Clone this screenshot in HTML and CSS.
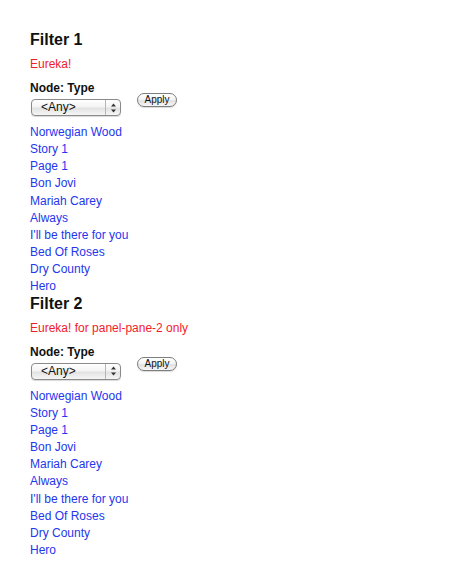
FILE: index.html
```html
<!DOCTYPE html>
<html>
<head>
<meta charset="utf-8">
<link rel="stylesheet" href="styles.css">
</head>
<body>
<div class="page">
  <section class="block">
    <h2 class="title">Filter 1</h2>
    <div class="note">Eureka!</div>
    <div class="label">Node: Type</div>
    <div class="row">
      <div class="select"><span class="sel-text">&lt;Any&gt;</span><span class="sel-arrows"><svg width="7" height="10" viewBox="0 0 7 10"><path d="M3.5 0.5 L6 3.5 L1 3.5 Z M3.5 9.5 L6 6.5 L1 6.5 Z" fill="#333"/></svg></span></div>
      <div class="btn">Apply</div>
    </div>
    <ul class="links">
      <li><a href="#">Norwegian Wood</a></li>
      <li><a href="#">Story 1</a></li>
      <li><a href="#">Page 1</a></li>
      <li><a href="#">Bon Jovi</a></li>
      <li><a href="#">Mariah Carey</a></li>
      <li><a href="#">Always</a></li>
      <li><a href="#">I'll be there for you</a></li>
      <li><a href="#">Bed Of Roses</a></li>
      <li><a href="#">Dry County</a></li>
      <li><a href="#">Hero</a></li>
    </ul>
  </section>
  <section class="block">
    <h2 class="title">Filter 2</h2>
    <div class="note">Eureka! for panel-pane-2 only</div>
    <div class="label">Node: Type</div>
    <div class="row">
      <div class="select"><span class="sel-text">&lt;Any&gt;</span><span class="sel-arrows"><svg width="7" height="10" viewBox="0 0 7 10"><path d="M3.5 0.5 L6 3.5 L1 3.5 Z M3.5 9.5 L6 6.5 L1 6.5 Z" fill="#333"/></svg></span></div>
      <div class="btn">Apply</div>
    </div>
    <ul class="links">
      <li><a href="#">Norwegian Wood</a></li>
      <li><a href="#">Story 1</a></li>
      <li><a href="#">Page 1</a></li>
      <li><a href="#">Bon Jovi</a></li>
      <li><a href="#">Mariah Carey</a></li>
      <li><a href="#">Always</a></li>
      <li><a href="#">I'll be there for you</a></li>
      <li><a href="#">Bed Of Roses</a></li>
      <li><a href="#">Dry County</a></li>
      <li><a href="#">Hero</a></li>
    </ul>
  </section>
</div>
</body>
</html>
```
FILE: styles.css
```css
html, body {
  margin: 0;
  padding: 0;
  background: #ffffff;
}
body {
  font-family: "Liberation Sans", Arial, Helvetica, sans-serif;
  font-size: 12px;
  color: #000;
}
.page {
  padding: 30px 0 0 30px;
}
.block {
  margin: 0;
}
.block + .block {
  margin-top: -2px;
}
.title {
  margin: 0;
  font-size: 16px;
  font-weight: bold;
  line-height: 19px;
  color: #111;
}
.note {
  margin-top: 7px;
  line-height: 17px;
  color: #f31a2c;
}
.label {
  margin-top: 7px;
  line-height: 17px;
  font-weight: bold;
  color: #111;
}
.row {
  display: flex;
  align-items: flex-start;
  margin-top: -4px;
}
.select {
  margin-top: 6px;
  margin-left: 1px;
  width: 88px;
  height: 15px;
  border: 1px solid #8a8a8a;
  border-radius: 4px;
  background: linear-gradient(#ffffff, #f4f4f4 45%, #e2e2e2 55%, #f6f6f6);
  display: flex;
  align-items: center;
  box-shadow: 0 1px 1px rgba(0,0,0,0.15);
}
.sel-text {
  flex: 1;
  padding-left: 9px;
  font-size: 12px;
  line-height: 15px;
  color: #111;
}
.sel-arrows {
  width: 14px;
  height: 15px;
  border-left: 1px solid #b5b5b5;
  display: flex;
  align-items: center;
  justify-content: center;
}
.btn {
  margin-left: 16px;
  width: 38px;
  height: 12px;
  border: 1px solid #7d7d7d;
  border-radius: 7px;
  background: linear-gradient(#ffffff, #f2f2f2 50%, #e2e2e2 55%, #f6f6f6);
  font-size: 10px;
  line-height: 12px;
  text-align: center;
  color: #111;
  box-shadow: 0 1px 1px rgba(0,0,0,0.15);
}
.links {
  list-style: none;
  margin: 8px 0 0 0;
  padding: 0;
}
.links li {
  line-height: 17.15px;
}
.links a {
  color: #2436ee;
  text-decoration: none;
}
```
